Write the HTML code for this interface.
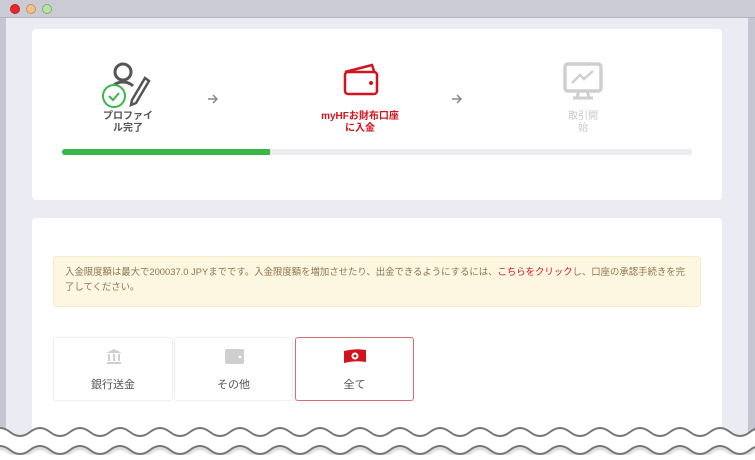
<!DOCTYPE html>
<html><head><meta charset="utf-8"><style>
*{margin:0;padding:0;box-sizing:border-box}
body{width:755px;height:460px;overflow:hidden;position:relative;background:#ebebf4;font-family:"Liberation Sans","Noto Sans CJK JP",sans-serif}
.abs{position:absolute}
.card{position:absolute;left:32px;width:690px;background:#fff;border-radius:4px}
.lbl{position:absolute;font-size:10px;font-weight:bold;text-align:center;line-height:12px;width:120px}
.btn{position:absolute;top:337px;height:64px;border:1px solid #eee;border-radius:3px;background:#fff;text-align:center;font-size:11px;color:#555}
.btn span{position:absolute;left:0;right:0;top:38px}
</style></head><body>
<div class="abs" style="left:0;top:0;width:755px;height:18px;background:#cbcbd6;border-bottom:1px solid #b3b3bf"></div>
<div class="abs" style="left:10px;top:4px;width:10px;height:10px;border-radius:50%;background:#e8262c;border:1px solid #b22"></div>
<div class="abs" style="left:26px;top:4px;width:10px;height:10px;border-radius:50%;background:#f3c08a;border:1px solid #c9954f"></div>
<div class="abs" style="left:42px;top:4px;width:10px;height:10px;border-radius:50%;background:#b9e2a6;border:1px solid #7fae6c"></div>
<div class="abs" style="left:0;top:18px;width:6px;height:442px;background:#c6c6d2"></div>
<div class="abs" style="left:748px;top:18px;width:7px;height:442px;background:#c6c6d2"></div>

<div class="card" style="top:29px;height:171px"></div>
<svg class="abs" style="left:98px;top:58px" width="56" height="52" viewBox="0 0 56 52">
<circle cx="25" cy="14" r="8" fill="none" stroke="#555" stroke-width="3"/>
<path d="M12 36 Q14 24 25 24 Q31 24 35 28" fill="none" stroke="#555" stroke-width="3"/>
<path d="M34 42 L47 20 L51 23 L38 45 L33 47 Z" fill="none" stroke="#555" stroke-width="2.5"/>
<circle cx="16" cy="38" r="11" fill="#fff" stroke="#39b54a" stroke-width="2"/>
<path d="M11 38 L15 42 L21 35" fill="none" stroke="#39b54a" stroke-width="2"/>
</svg>
<div class="lbl" style="left:68px;top:111px;color:#555">プロファイ<br>ル完了</div>
<svg class="abs" style="left:207px;top:93px" width="12" height="12" viewBox="0 0 12 12"><path d="M1 6 H10 M6 2 L10 6 L6 10" fill="none" stroke="#888" stroke-width="1.5"/></svg>
<svg class="abs" style="left:342px;top:62px" width="38" height="36" viewBox="0 0 38 36">
<path d="M3 10 L30 3 L32 9" fill="none" stroke="#d0131d" stroke-width="2.5"/>
<rect x="3" y="10" width="32" height="22" rx="3" fill="none" stroke="#d0131d" stroke-width="2.5"/>
<circle cx="29" cy="21" r="2" fill="#d0131d"/>
</svg>
<div class="lbl" style="left:300px;top:111px;color:#d0131d">myHFお財布口座<br>に入金</div>
<svg class="abs" style="left:451px;top:93px" width="12" height="12" viewBox="0 0 12 12"><path d="M1 6 H10 M6 2 L10 6 L6 10" fill="none" stroke="#888" stroke-width="1.5"/></svg>
<svg class="abs" style="left:563px;top:62px" width="40" height="40" viewBox="0 0 40 40">
<rect x="2" y="2" width="36" height="27" rx="3" fill="none" stroke="#cfcfcf" stroke-width="3.5"/>
<path d="M9 21 L17 13 L21 17 L30 9" fill="none" stroke="#cfcfcf" stroke-width="2.5"/>
<path d="M16 29 L14 35 M24 29 L26 35 M10 36 L30 36" stroke="#cfcfcf" stroke-width="3"/>
</svg>
<div class="lbl" style="left:523px;top:111px;color:#c8c8c8;font-weight:normal">取引開<br>始</div>
<div class="abs" style="left:62px;top:149px;width:630px;height:6px;border-radius:3px;background:#ebebf2"></div>
<div class="abs" style="left:62px;top:149px;width:208px;height:6px;border-radius:3px 0 0 3px;background:#39b54a"></div>

<div class="card" style="top:218px;height:242px"></div>
<div class="abs" style="left:53px;top:256px;width:648px;height:51px;background:#fdf6e1;border:1px solid #f6edcc;border-radius:3px;padding:7px 11px;font-size:9.4px;line-height:15px;color:#8d7550">入金限度額は最大で200037.0 JPYまでです。入金限度額を増加させたり、出金できるようにするには、<span style="color:#d0131d">こちらをクリック</span>し、口座の承認手続きを完了してください。</div>

<div class="btn" style="left:53px;width:120px">
<svg class="abs" style="left:51px;top:10px" width="18" height="16" viewBox="0 0 18 16"><path d="M1 5 L9 1 L17 5 Z M2 14 H16 V16 H2Z" fill="#cfcfcf"/><rect x="3" y="6" width="2" height="7" fill="#cfcfcf"/><rect x="8" y="6" width="2" height="7" fill="#cfcfcf"/><rect x="13" y="6" width="2" height="7" fill="#cfcfcf"/></svg>
<span>銀行送金</span></div>
<div class="btn" style="left:174px;width:119px">
<svg class="abs" style="left:50px;top:10px" width="19" height="16" viewBox="0 0 19 16"><rect x="0" y="1" width="19" height="15" rx="2" fill="#cfcfcf"/><circle cx="15" cy="9" r="1.3" fill="#fff"/></svg>
<span>その他</span></div>
<div class="btn" style="left:295px;width:119px;border-color:#dd6a71">
<svg class="abs" style="left:47px;top:10px" width="24" height="16" viewBox="0 0 24 16"><path d="M1 3 Q12 0 23 2 L23 14 Q12 12 1 15 Z" fill="#d0131d"/><circle cx="12" cy="8" r="3.5" fill="#fff"/><circle cx="12" cy="8" r="1.5" fill="#d0131d"/></svg>
<span>全て</span></div>

<svg class="abs" style="left:0;top:420px" width="755" height="40" viewBox="0 0 755 40">
<defs><filter id="s"><feDropShadow dx="0" dy="2" stdDeviation="1.5" flood-opacity=".3"/></filter></defs>
<path d="M-10 12 q10 -8 20 0 q10 8 20 0 q10 -8 20 0 q10 8 20 0 q10 -8 20 0 q10 8 20 0 q10 -8 20 0 q10 8 20 0 q10 -8 20 0 q10 8 20 0 q10 -8 20 0 q10 8 20 0 q10 -8 20 0 q10 8 20 0 q10 -8 20 0 q10 8 20 0 q10 -8 20 0 q10 8 20 0 q10 -8 20 0 q10 8 20 0 q10 -8 20 0 q10 8 20 0 q10 -8 20 0 q10 8 20 0 q10 -8 20 0 q10 8 20 0 q10 -8 20 0 q10 8 20 0 q10 -8 20 0 q10 8 20 0 q10 -8 20 0 q10 8 20 0 q10 -8 20 0 q10 8 20 0 q10 -8 20 0 q10 8 20 0 q10 -8 20 0 q10 8 20 0 q10 -8 20 0 q10 8 20 0 V40 H-10Z" fill="#fff"/>
<path d="M-10 12 q10 -8 20 0 q10 8 20 0 q10 -8 20 0 q10 8 20 0 q10 -8 20 0 q10 8 20 0 q10 -8 20 0 q10 8 20 0 q10 -8 20 0 q10 8 20 0 q10 -8 20 0 q10 8 20 0 q10 -8 20 0 q10 8 20 0 q10 -8 20 0 q10 8 20 0 q10 -8 20 0 q10 8 20 0 q10 -8 20 0 q10 8 20 0 q10 -8 20 0 q10 8 20 0 q10 -8 20 0 q10 8 20 0 q10 -8 20 0 q10 8 20 0 q10 -8 20 0 q10 8 20 0 q10 -8 20 0 q10 8 20 0 q10 -8 20 0 q10 8 20 0 q10 -8 20 0 q10 8 20 0 q10 -8 20 0 q10 8 20 0 q10 -8 20 0 q10 8 20 0 q10 -8 20 0 q10 8 20 0" fill="none" stroke="#777" stroke-width="2"/>
<path d="M-10 30 q10 -8 20 0 q10 8 20 0 q10 -8 20 0 q10 8 20 0 q10 -8 20 0 q10 8 20 0 q10 -8 20 0 q10 8 20 0 q10 -8 20 0 q10 8 20 0 q10 -8 20 0 q10 8 20 0 q10 -8 20 0 q10 8 20 0 q10 -8 20 0 q10 8 20 0 q10 -8 20 0 q10 8 20 0 q10 -8 20 0 q10 8 20 0 q10 -8 20 0 q10 8 20 0 q10 -8 20 0 q10 8 20 0 q10 -8 20 0 q10 8 20 0 q10 -8 20 0 q10 8 20 0 q10 -8 20 0 q10 8 20 0 q10 -8 20 0 q10 8 20 0 q10 -8 20 0 q10 8 20 0 q10 -8 20 0 q10 8 20 0 q10 -8 20 0 q10 8 20 0 q10 -8 20 0 q10 8 20 0" fill="none" stroke="#777" stroke-width="2" filter="url(#s)"/>
</svg>
</body></html>
